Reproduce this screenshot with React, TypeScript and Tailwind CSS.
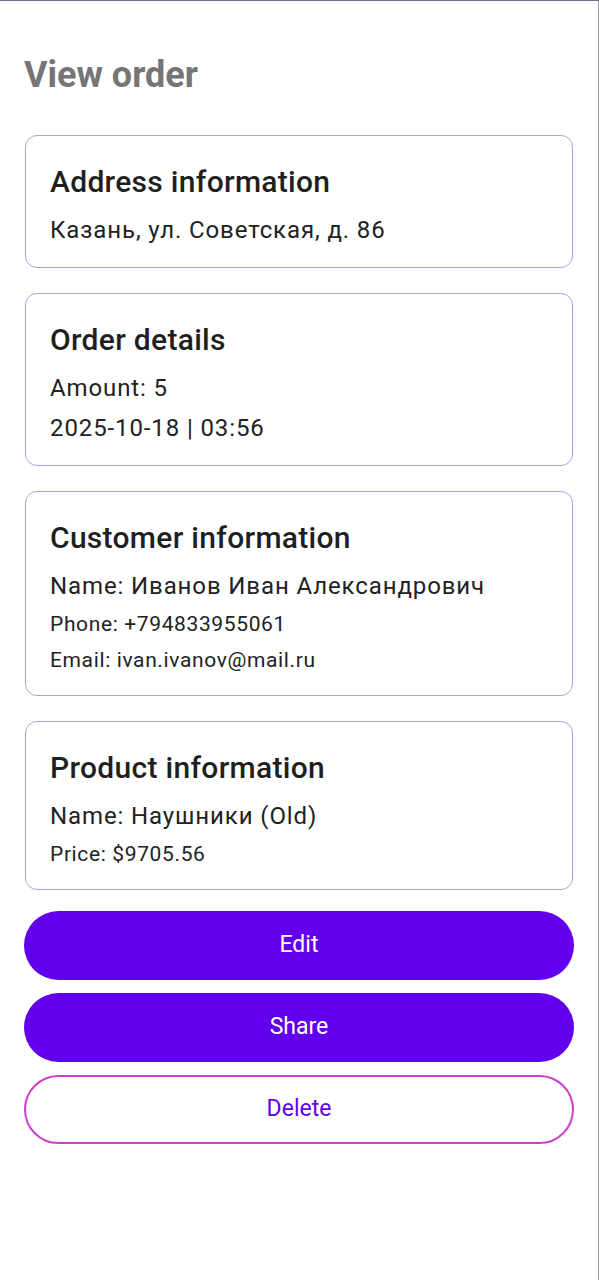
import React from "react";

type Line = { text: string; small?: boolean };

const cards: { title: string; lines: Line[] }[] = [
  { title: "Address information", lines: [{ text: "Казань, ул. Советская, д. 86" }] },
  { title: "Order details", lines: [{ text: "Amount: 5" }, { text: "2025-10-18 | 03:56" }] },
  {
    title: "Customer information",
    lines: [
      { text: "Name: Иванов Иван Александрович" },
      { text: "Phone: +794833955061", small: true },
      { text: "Email: ivan.ivanov@mail.ru", small: true },
    ],
  },
  {
    title: "Product information",
    lines: [{ text: "Name: Наушники (Old)" }, { text: "Price: $9705.56", small: true }],
  },
];

const InfoCard: React.FC<{ title: string; lines: Line[] }> = ({ title, lines }) => {
  return (
    <div className="mx-[1px] rounded-xl border border-[#b79be6] bg-white px-6 pt-[28px] pb-[17px]">
      <h2 className="mb-[10px] text-[30px] leading-[36px] font-medium tracking-[0.01em] text-[#1f1f1f]">{title}</h2>
      {lines.map((l) =>
        l.small ? (
          <p key={l.text} className="text-[21px] leading-[36px] tracking-[0.03em] text-[#222]">
            {l.text}
          </p>
        ) : (
          <p key={l.text} className="text-[24px] leading-[40px] tracking-[0.037em] text-[#222]">
            {l.text}
          </p>
        )
      )}
    </div>
  );
};

export default function App() {
  return (
    <div
      className="min-h-[1280px] w-[599px] border-t border-r border-t-[#7b6a85] border-r-[#9a9a9a] bg-white px-6 pt-[54px]"
      style={{ fontFamily: "Roboto, 'Noto Sans', sans-serif" }}
    >
      {/* header */}
      <h1 className="text-[36px] leading-[40px] font-bold text-[#757575]">View order</h1>

      {/* cards */}
      <div className="mt-[40px] flex flex-col gap-[25px]">
        {cards.map((c) => (
          <InfoCard key={c.title} title={c.title} lines={c.lines} />
        ))}
      </div>

      {/* actions */}
      <div className="mt-[21px] flex flex-col gap-[13px]">
        <button className="h-[69px] w-full rounded-full bg-[#6200ee] text-[23px] text-white">Edit</button>
        <button className="h-[69px] w-full rounded-full bg-[#6200ee] text-[23px] text-white">Share</button>
        <button className="h-[69px] w-full rounded-full border-2 border-[#cc3fcc] bg-white text-[23px] text-[#6200ee]">
          Delete
        </button>
      </div>
    </div>
  );
}
